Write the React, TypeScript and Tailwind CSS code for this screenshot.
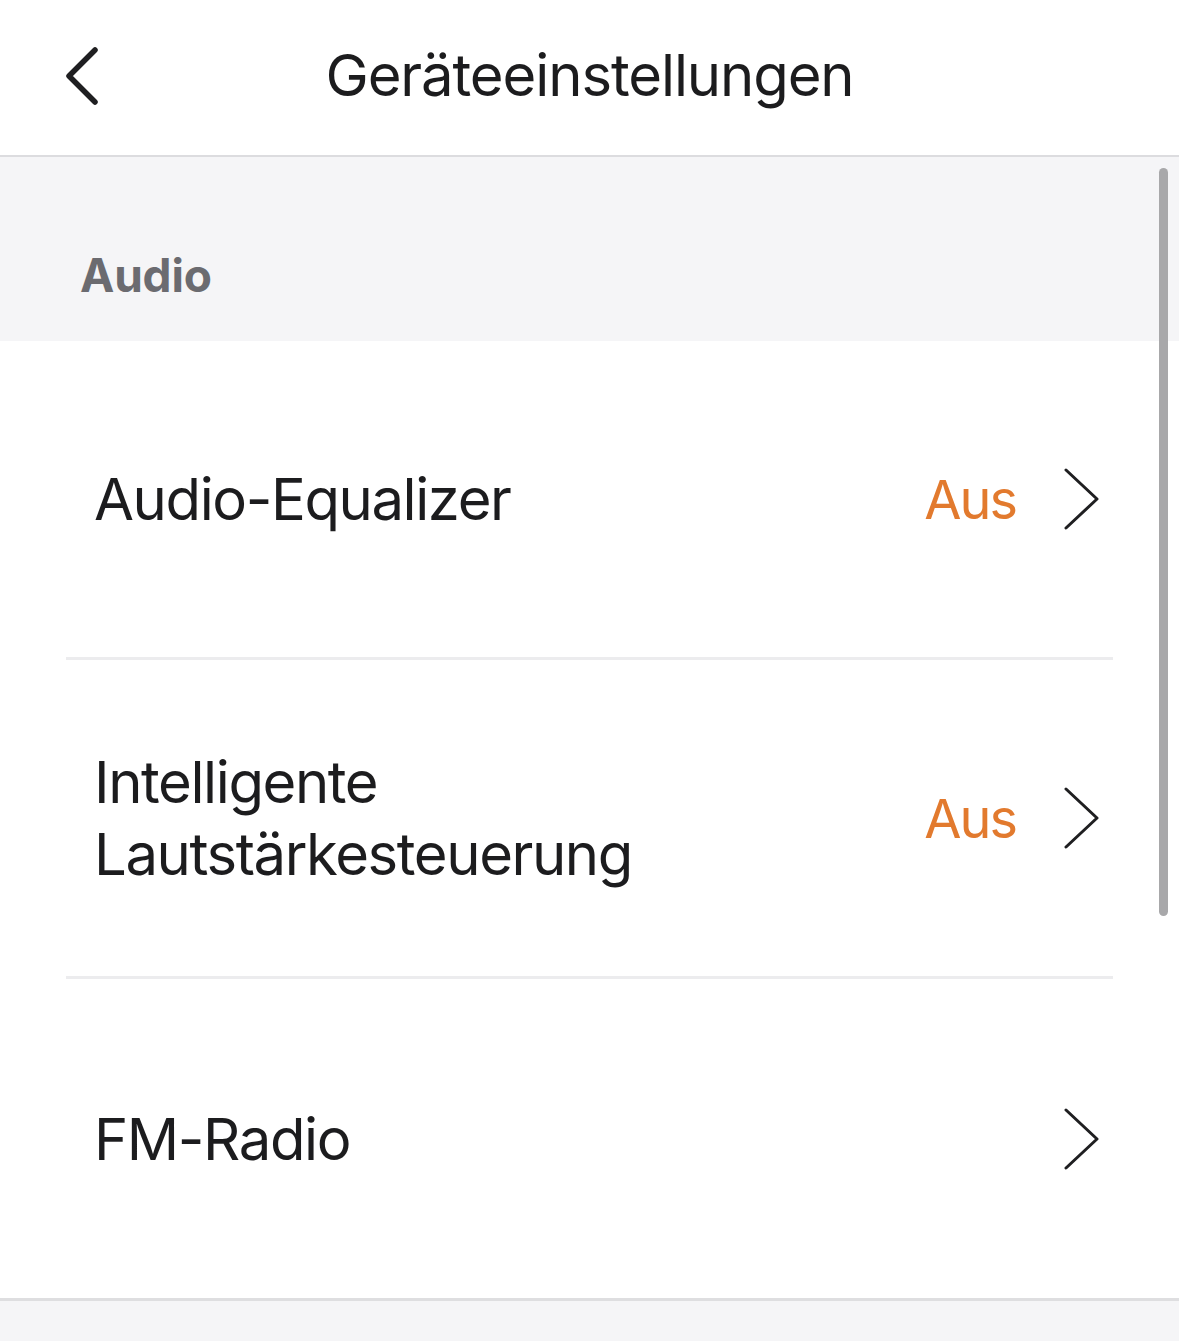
import { ReactNode } from 'react'

function ChevronRight() {
  return (
    <svg width="36" height="64" viewBox="0 0 36 64" fill="none" className="shrink-0">
      <path d="M2 3 L33 32 L2 61" stroke="#1f1f21" strokeWidth="3" strokeLinecap="round" strokeLinejoin="round" />
    </svg>
  )
}

function Row({ label, value, last }: { label: ReactNode; value?: string; last?: boolean }) {
  return (
    <div className={`flex items-center h-[319px] pl-[28px] pr-[13px] ${last ? '' : 'border-b-[3px] border-[#ececee]'}`}>
      <div className="flex-1 text-[58px] leading-[72px] text-[#1c1c1e] tracking-[-1.4px]">{label}</div>
      {value && <span className="text-[54px] text-[#e27a2e] mr-[48px] tracking-[-2px]">{value}</span>}
      <ChevronRight />
    </div>
  )
}

export default function App() {
  return (
    <div className="w-[1179px] h-[1341px] bg-[#f5f5f7] relative overflow-hidden font-['Inter',sans-serif]">
      <header className="h-[157px] bg-white border-b-[2px] border-[#dcdcdf] grid grid-cols-[1fr_auto_1fr] items-center">
        <div className="pl-[63px] pb-[4px]">
          <svg width="38" height="58" viewBox="0 0 38 58" fill="none">
            <path d="M32 3 L6 29 L32 55" stroke="#1f1f21" strokeWidth="5.5" strokeLinecap="round" strokeLinejoin="round" />
          </svg>
        </div>
        <h1 className="text-[58px] text-[#1c1c1e] font-normal tracking-[-1.1px] pb-[4px]">Geräteeinstellungen</h1>
        <div />
      </header>

      <div className="h-[184px] flex items-end pl-[80px] pb-[31px]">
        <span className="text-[46px] font-bold text-[#6b6b70] tracking-[-0.2px]">Audio</span>
      </div>

      <div className="bg-white border-b-[3px] border-[#dedee0] px-[66px]">
        <Row label="Audio-Equalizer" value="Aus" />
        <Row
          label={
            <>
              Intelligente
              <br />
              Lautstärkesteuerung
            </>
          }
          value="Aus"
        />
        <Row label="FM-Radio" last />
      </div>

      <div className="absolute right-[11px] top-[168px] w-[9px] h-[748px] rounded-full bg-[#a8a8aa]" />
    </div>
  )
}
